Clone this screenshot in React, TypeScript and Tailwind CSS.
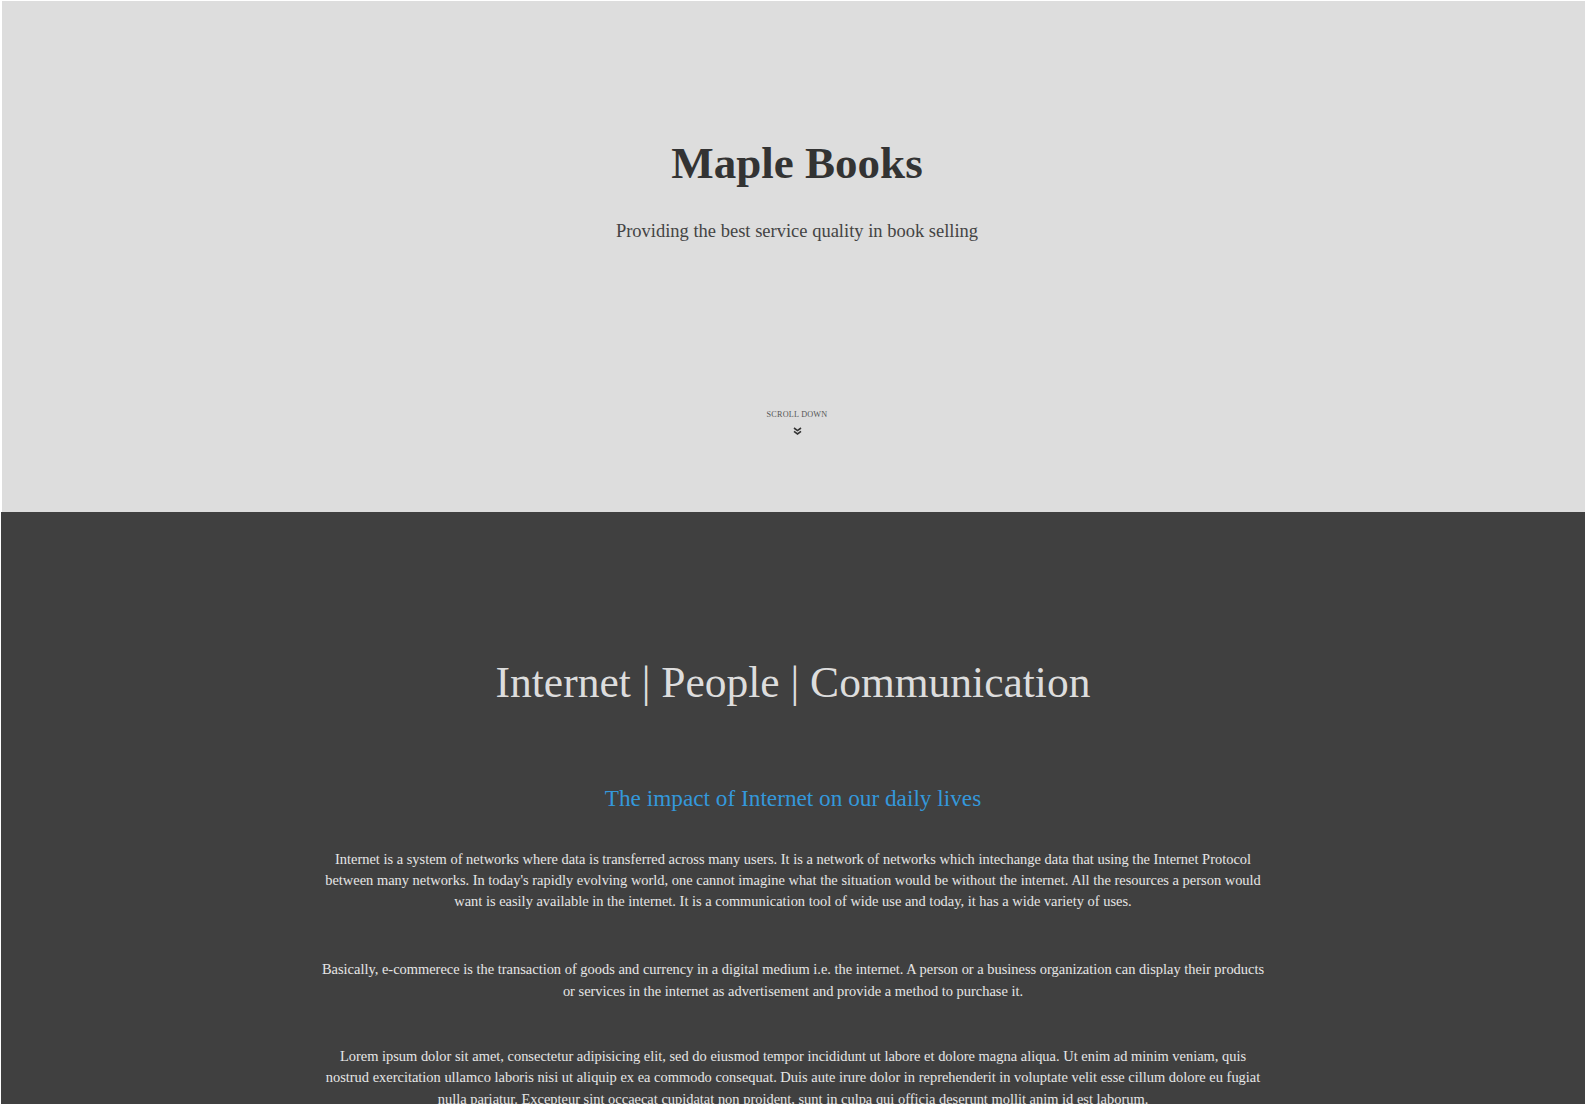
import React from "react";

const serif = { fontFamily: '"Liberation Serif", "DejaVu Serif", serif' };

export default function App() {
  return (
    <div className="h-[1104px] overflow-hidden bg-white pt-[1px] pl-[1px] pr-[7px]" style={serif}>
      <section className="ml-[1px] pl-[7px] h-[511px] bg-[#dddddd] flex flex-col items-center">
        <h1 className="mt-[140px] text-[45px] leading-none font-bold text-[#333333]">Maple Books</h1>
        <p className="mt-[36px] text-[18.5px] leading-none text-[#444444]">
          Providing the best service quality in book selling
        </p>
        <div className="mt-[170px] text-[8.2px] leading-none tracking-[0.2px] text-[#555555]">SCROLL DOWN</div>
        <svg className="mt-[8px]" width="9" height="8" viewBox="0 0 9 8" fill="none" stroke="#333" strokeWidth="1.6">
          <path d="M1 1 L4.5 3.6 L8 1" />
          <path d="M1 4.4 L4.5 7 L8 4.4" />
        </svg>
      </section>
      <section className="bg-[#404040] flex flex-col items-center h-[700px]">
        <h2 className="mt-[149px] text-[43.5px] leading-none text-[#dddddd]">
          Internet&nbsp;|&nbsp;People&nbsp;|&nbsp;Communication
        </h2>
        <h3 className="mt-[82px] text-[23.25px] leading-none text-[#3498db]">
          The impact of Internet on our daily lives
        </h3>
        <div className="mt-[39px] w-[1000px] text-center text-[14.45px] leading-[21.3px] text-[#e6e6e6]">
          <p>
            Internet is a system of networks where data is transferred across many users. It is a network of networks which intechange data that using the Internet Protocol
            <br />
            between many networks. In today's rapidly evolving world, one cannot imagine what the situation would be without the internet. All the resources a person would
            <br />
            want is easily available in the internet. It is a communication tool of wide use and today, it has a wide variety of uses.
          </p>
          <p className="mt-[46.7px]">
            Basically, e-commerece is the transaction of goods and currency in a digital medium i.e. the internet. A person or a business organization can display their products
            <br />
            or services in the internet as advertisement and provide a method to purchase it.
          </p>
          <p className="mt-[44px]">
            Lorem ipsum dolor sit amet, consectetur adipisicing elit, sed do eiusmod tempor incididunt ut labore et dolore magna aliqua. Ut enim ad minim veniam, quis
            <br />
            nostrud exercitation ullamco laboris nisi ut aliquip ex ea commodo consequat. Duis aute irure dolor in reprehenderit in voluptate velit esse cillum dolore eu fugiat
            <br />
            nulla pariatur. Excepteur sint occaecat cupidatat non proident, sunt in culpa qui officia deserunt mollit anim id est laborum.
          </p>
        </div>
      </section>
    </div>
  );
}
